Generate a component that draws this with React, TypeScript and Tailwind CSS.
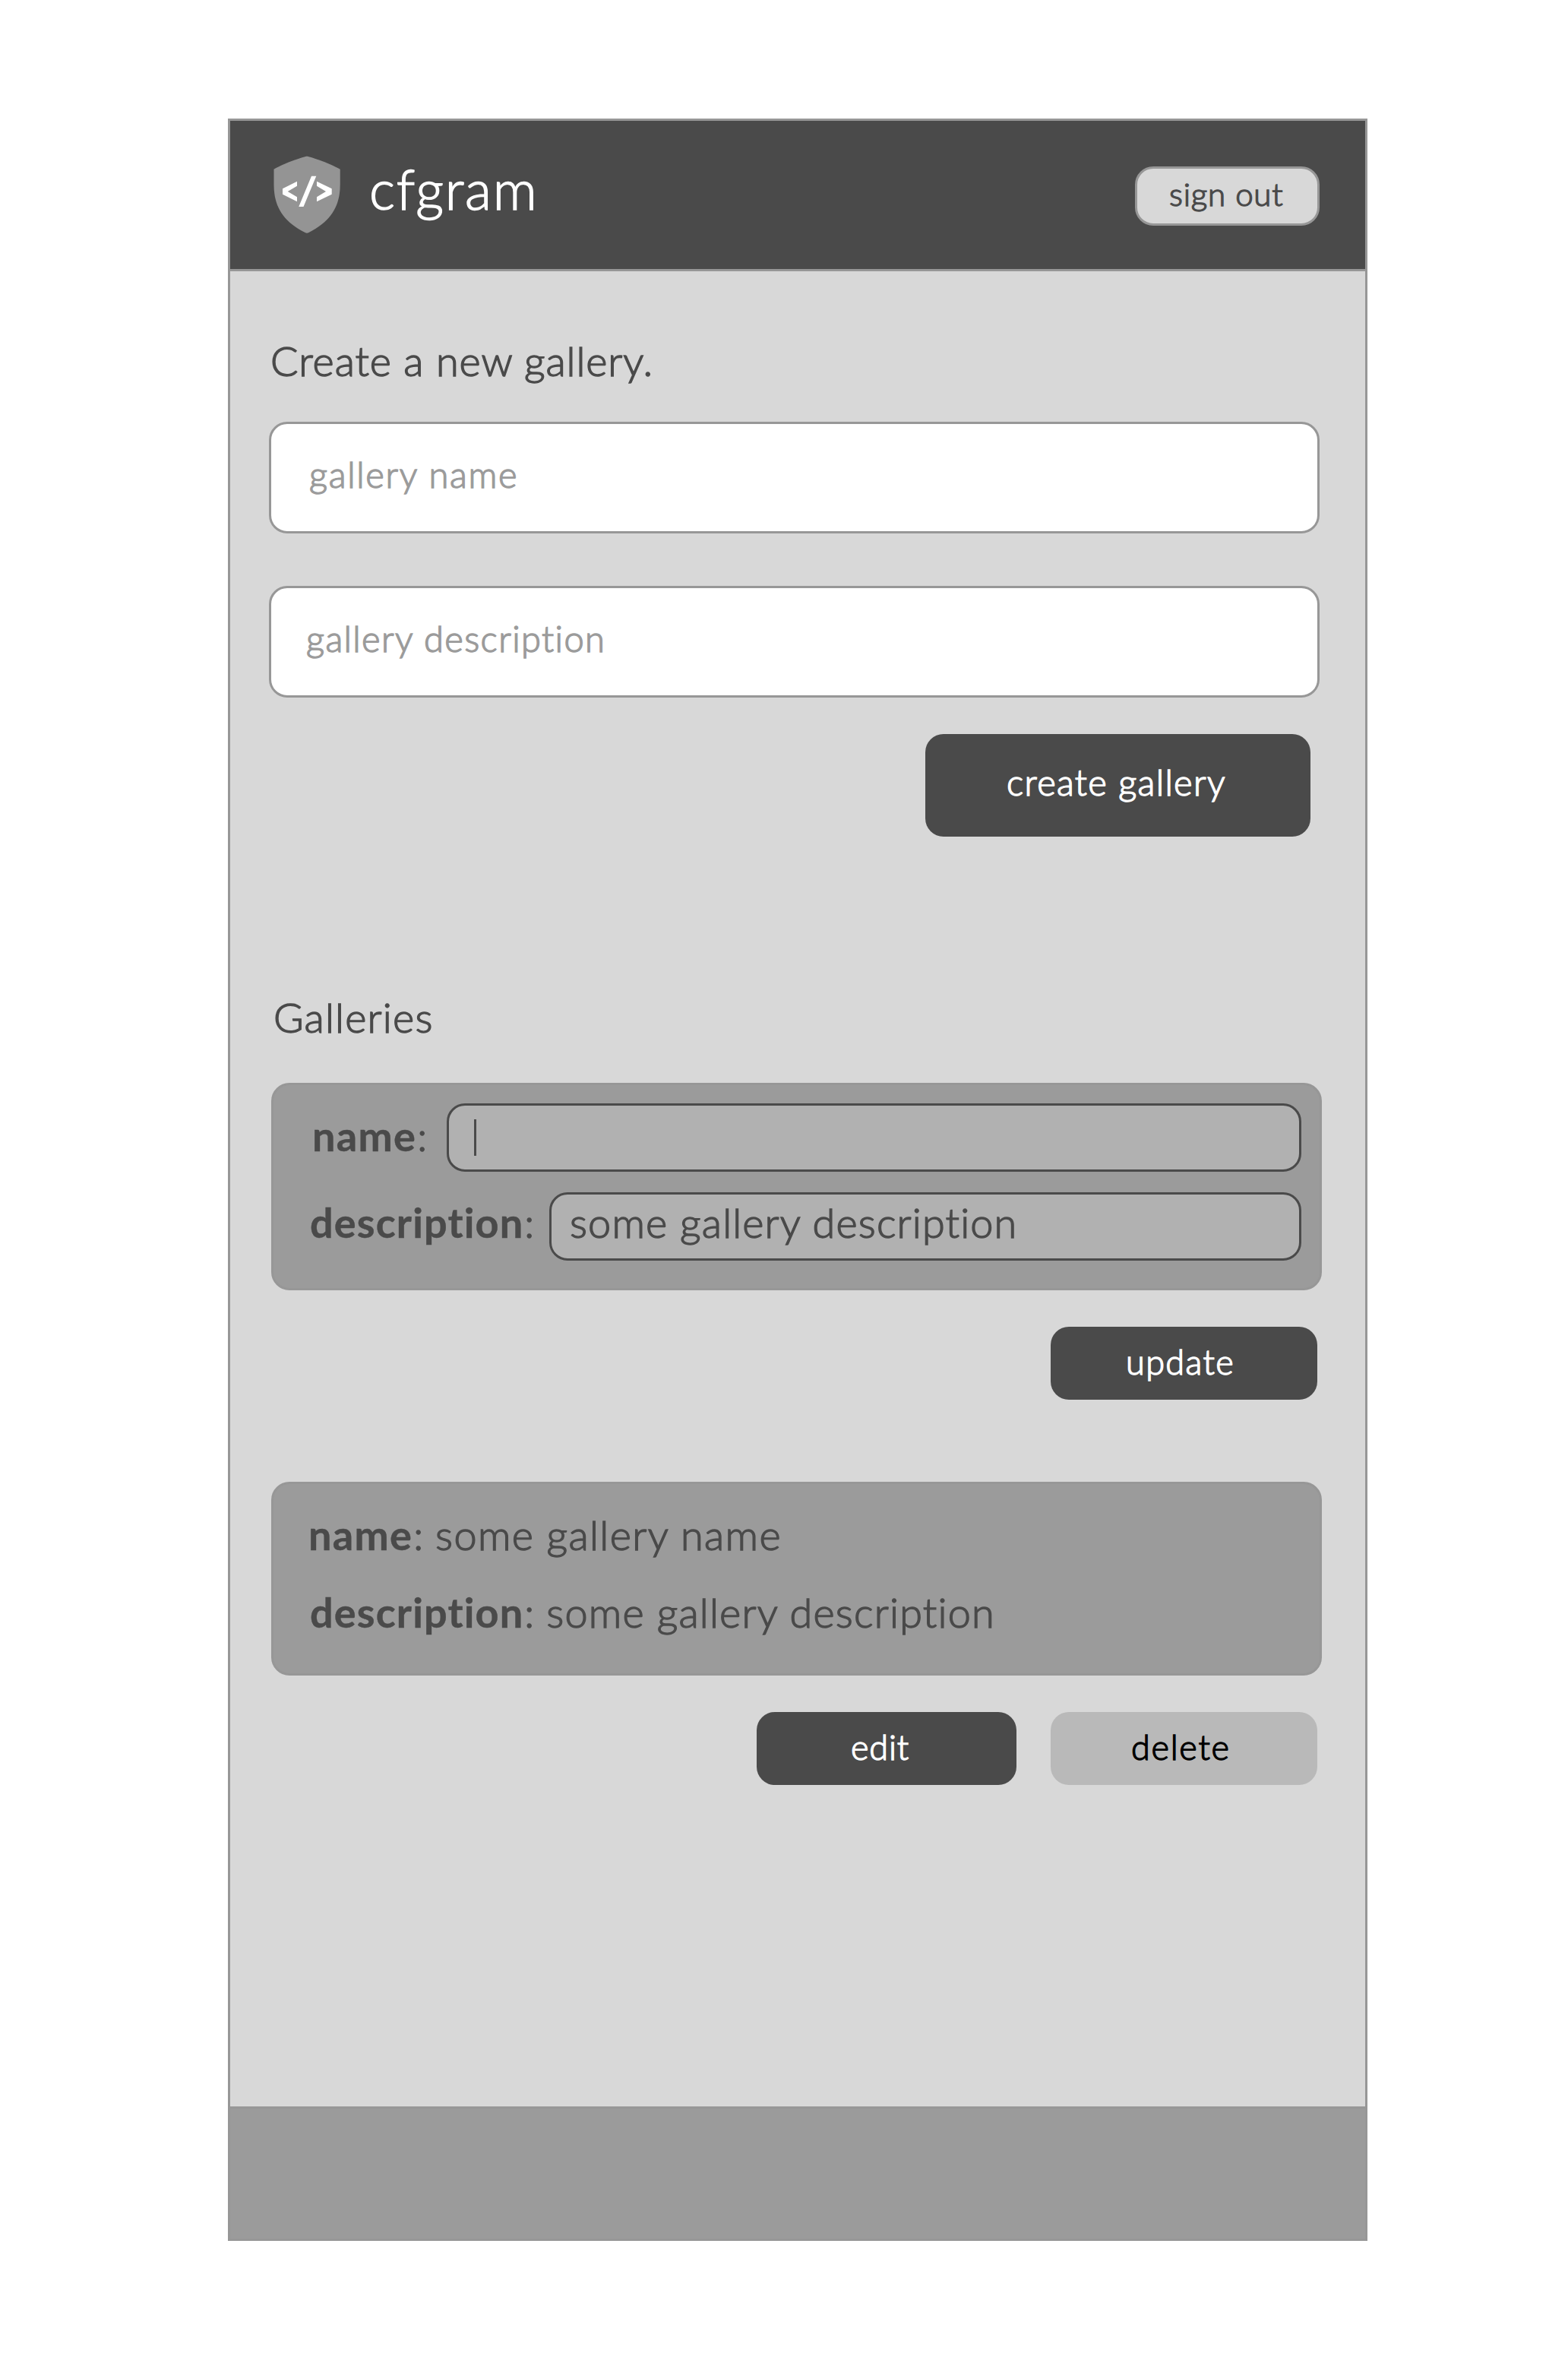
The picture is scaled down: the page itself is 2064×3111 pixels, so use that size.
const light = "block whitespace-nowrap leading-none font-light [-webkit-text-stroke:1.4px_currentColor]";
const bold = "block whitespace-nowrap text-[54px] leading-none font-bold [-webkit-text-stroke:0.4px_currentColor]";

function Logo() {
  return (
    <svg className="mt-[46px] ml-[57px] h-[104px] w-[88px] shrink-0" viewBox="0 0 88 104">
      <path
        fill="#949494"
        d="M44 .7C46 .7 72 8.5 87.7 17.7V38C87.7 66 76 86 46.5 101Q44 102.3 41.5 101C12 86 .5 66 .5 38V17.7C16 8.5 42 .7 44 .7Z"
      />
      <path
        fill="#fff"
        d="M31 33.7 12 43.3V50.7L31 60.3V54.2L18.7 47 31 39.7ZM50 26.7H56.3L39.5 67H33.3ZM57 33.7 76.7 43.3V50.7L57 60.3V54.2L69 47 57 39.7Z"
      />
    </svg>
  );
}

function Header() {
  return (
    <header className="flex h-[198px] items-start border-b-3 border-[#979797] bg-[#4a4a4a]">
      <Logo />
      <h1 className={`${light} mt-[53px] ml-[38px] text-[72px] tracking-[1.7px] text-white`}>cfgram</h1>
      <button className="mt-[60px] mr-[60px] ml-auto flex h-[78px] w-[243px] items-start rounded-[24px] border-3 border-[#979797] bg-[#d8d8d8] pt-3 pl-[42px]">
        <span className={`${light} text-[42px] tracking-[0.8px]`}>sign out</span>
      </button>
    </header>
  );
}

function CreateGallery() {
  return (
    <section className="flex flex-col items-start">
      <h2 className={`${light} mt-[91px] ml-[53px] text-[54px] tracking-[0.9px]`}>Create a new gallery.</h2>
      <div className="mt-[53px] ml-[51px] flex h-[147px] w-[1383px] items-start rounded-[24px] border-3 border-[#979797] bg-white pt-[43px] pl-[50px] text-[#9b9b9b]">
        <span className={`${light} text-[47px] tracking-[1.7px]`}>gallery name</span>
      </div>
      <div className="mt-[69px] ml-[51px] flex h-[147px] w-[1383px] items-start rounded-[24px] border-3 border-[#979797] bg-white pt-[43px] pl-[46px] text-[#9b9b9b]">
        <span className={`${light} text-[47px] tracking-[1.4px]`}>gallery description</span>
      </div>
      <button className="mt-[48px] ml-[915px] flex h-[135px] w-[507px] items-start rounded-[24px] bg-[#4a4a4a] pt-[40px] pl-[107px] text-white">
        <span className={`${light} text-[47px] tracking-[1.35px]`}>create gallery</span>
      </button>
    </section>
  );
}

function EditableCard() {
  return (
    <div className="ml-[54px] flex h-[273px] w-[1383px] flex-col gap-[27px] rounded-[24px] border-3 border-[#979797] bg-[#9b9b9b] pt-6 pr-6">
      <div className="flex h-[90px] items-start">
        <div className="flex w-[228px] shrink-0 pt-4 pl-[51px]">
          <strong className={`${bold} tracking-[1.3px]`}>name</strong>
          <span className={`${light} ml-px text-[54px]`}>:</span>
        </div>
        <div className="flex h-[90px] grow items-start rounded-[24px] border-3 border-[#4a4a4a] bg-[#b1b1b1] pt-[18px] pl-[33px]">
          <div className="h-12 w-[3px] bg-[#4a4a4a]" />
        </div>
      </div>
      <div className="flex h-[90px] items-start">
        <div className="flex w-[363px] shrink-0 pt-[13px] pl-12">
          <strong className={`${bold} tracking-[1.15px]`}>description</strong>
          <span className={`${light} ml-px text-[54px]`}>:</span>
        </div>
        <div className="flex h-[90px] grow items-start rounded-[24px] border-3 border-[#4a4a4a] bg-[#b1b1b1] pt-[10px] pl-6">
          <span className={`${light} text-[54px] tracking-[1.15px]`}>some gallery description</span>
        </div>
      </div>
    </div>
  );
}

function GalleryCard() {
  return (
    <div className="mt-[108px] ml-[54px] flex h-[255px] w-[1383px] flex-col items-start gap-12 rounded-[24px] border-3 border-[#979797] bg-[#9b9b9b] pt-10">
      <div className="flex pl-[46px]">
        <strong className={`${bold} tracking-[1.3px]`}>name</strong>
        <span className={`${light} ml-px text-[54px]`}>:</span>
        <span className={`${light} ml-[16px] text-[54px] tracking-[1.4px]`}>some gallery name</span>
      </div>
      <div className="flex pl-12">
        <strong className={`${bold} tracking-[1.15px]`}>description</strong>
        <span className={`${light} ml-px text-[54px]`}>:</span>
        <span className={`${light} ml-[16px] text-[54px] tracking-[1.2px]`}>some gallery description</span>
      </div>
    </div>
  );
}

export default function App() {
  return (
    <div className="h-[3111px] w-[2064px] bg-white pt-[156px] pl-[300px] font-['Lato',sans-serif] text-[#4a4a4a]">
      <div className="flex h-[2793px] w-[1500px] flex-col border-3 border-[#979797] bg-[#d8d8d8]">
        <Header />
        <main className="grow">
          <CreateGallery />
          <section className="flex flex-col items-start">
            <h2 className={`${light} mt-[211px] mb-[59px] ml-[57px] text-[54px] tracking-[1.2px]`}>Galleries</h2>
            <EditableCard />
            <button className="mt-12 ml-[1080px] flex h-24 w-[351px] items-start rounded-[24px] bg-[#4a4a4a] pt-6 pl-[99px] text-white">
              <span className={`${light} text-[45px] tracking-[1.4px]`}>update</span>
            </button>
            <GalleryCard />
            <div className="mt-12 ml-[693px] flex gap-[45px]">
              <button className="flex h-24 w-[342px] items-start rounded-[24px] bg-[#4a4a4a] pt-6 pl-[124px] text-white">
                <span className={`${light} text-[45px] tracking-[0.85px]`}>edit</span>
              </button>
              <button className="flex h-24 w-[351px] items-start rounded-[24px] bg-[#b9b9b9] pt-6 pl-[106px] text-black">
                <span className={`${light} text-[45px] tracking-[1.7px]`}>delete</span>
              </button>
            </div>
          </section>
        </main>
        <footer className="h-[174px] border-t-3 border-[#979797] bg-[#9b9b9b]" />
      </div>
    </div>
  );
}
